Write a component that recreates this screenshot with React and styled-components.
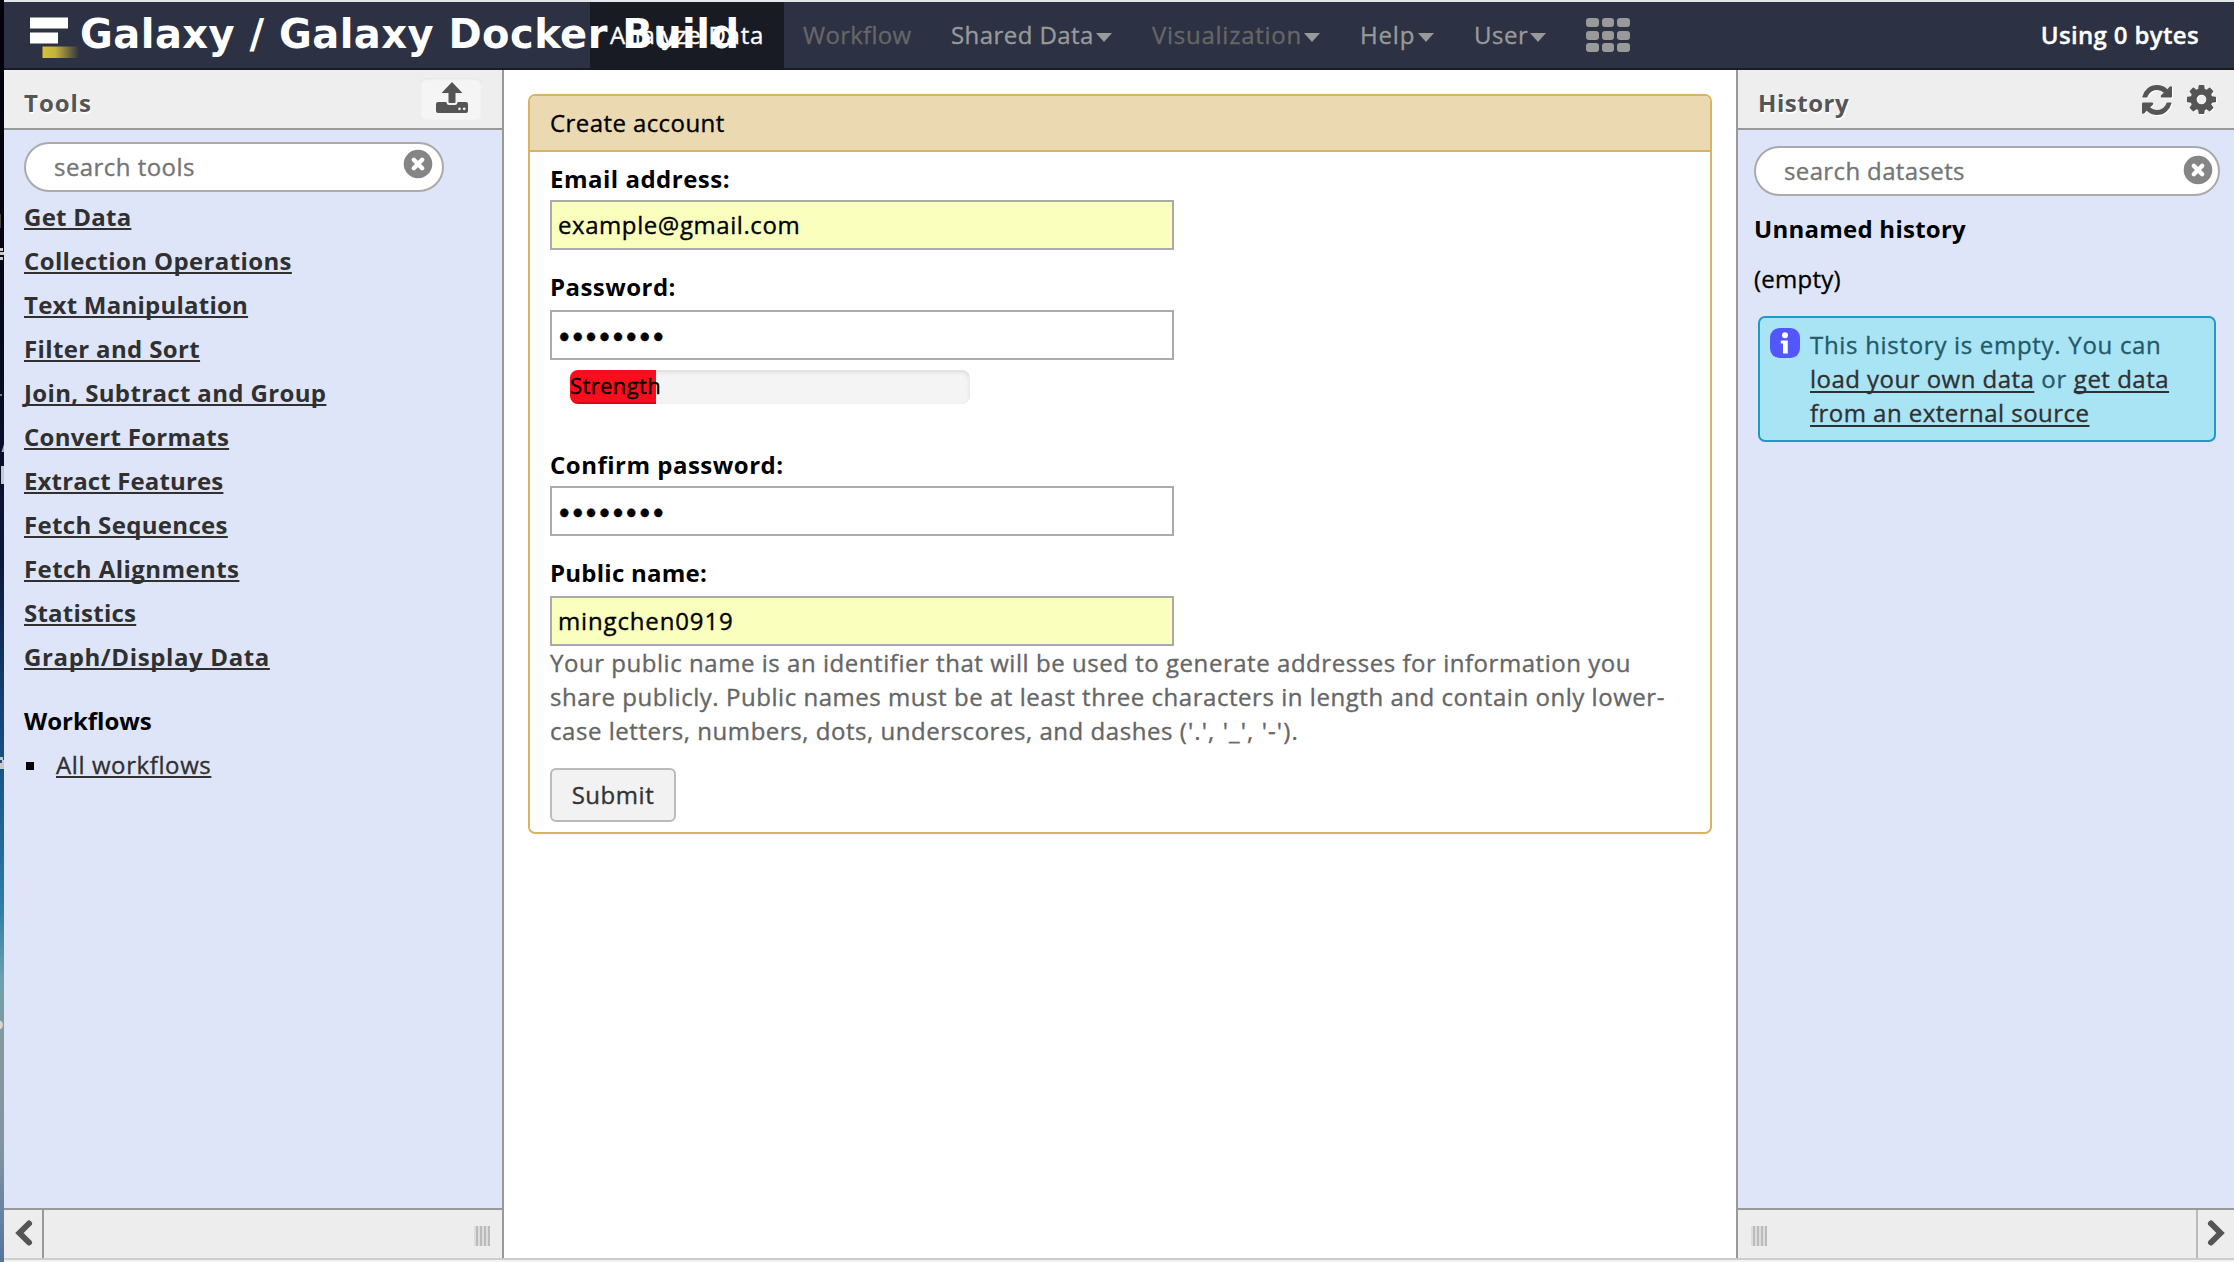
import React from "react";
import styled, { createGlobalStyle, css } from "styled-components";

const Global = createGlobalStyle`
  * { box-sizing: border-box; }
  html, body { margin: 0; padding: 0; }
  body {
    font-family: "Open Sans", "Noto Sans", sans-serif;
    font-size: 24px;
    line-height: 34px;
    color: #000;
    overflow: hidden;
    -webkit-text-stroke-width: 0.35px;
  }
  input, button { font: inherit; }
`;

const heavy = css`
  font-weight: 700;
  -webkit-text-stroke-width: 0;
`;

const Screen = styled.div`
  display: flex;
  width: 2234px;
  height: 1262px;
`;

const Desktop = styled.div`
  width: 4px;
  flex: none;
  background: linear-gradient(
    180deg,
    #02020a 0, #03040f 200px, #070b24 400px, #0d1839 560px, #14396b 680px,
    #1c5c90 800px, #2f7fa6 910px, #6fa0ae 980px, #86979c 1050px,
    #8194a4 1150px, #56749a 1262px
  );
  svg { display: block; }
`;

const Window = styled.div`
  flex: 1;
  display: flex;
  flex-direction: column;
  border-top: 2px solid #e3e7e8;
`;

const Masthead = styled.header`
  display: flex;
  height: 68px;
  flex: none;
  background: #2c3143;
  border-bottom: 2px solid #181b24;
`;

const Brand = styled.div`
  position: relative;
  z-index: 1;
  display: flex;
  align-items: flex-start;
  width: 586px;
  padding: 12px 0 0 23px;
  white-space: nowrap;
  svg { flex: none; }
`;

const BrandName = styled.span`
  ${heavy}
  margin-left: -3px;
  font: bold 40px/40px "DejaVu Sans", Verdana, sans-serif;
  letter-spacing: 0.45px;
  color: #fff;
`;

const Nav = styled.nav`
  display: flex;
  flex: 1;
`;

const navColors = { active: "#fff", normal: "#999", disabled: "#666" };

const NavItem = styled.a`
  display: flex;
  align-items: center;
  justify-content: space-between;
  width: ${(p) => p.$width}px;
  padding: 0 20px 0 ${(p) => p.$start || 20}px;
  white-space: nowrap;
  letter-spacing: ${(p) => p.$spacing}px;
  color: ${(p) => navColors[p.$state]};
  ${(p) => p.$state === "active" && css`background: #191b24;`}
`;

const Caret = styled.i`
  margin-top: 5px;
  border: 8px solid transparent;
  border-top: 9px solid #999;
  border-bottom: 0;
`;

const AppsGrid = styled.div`
  display: grid;
  grid-template-columns: repeat(3, 12.5px);
  grid-auto-rows: 9px;
  gap: 3.5px 3px;
  align-self: center;
  margin-left: 20px;
`;

const GridCell = styled.i`
  border-radius: 3px;
  background: #999;
`;

const Quota = styled.div`
  align-self: center;
  padding-right: 35px;
  font-weight: 600;
  letter-spacing: 0.35px;
  color: #fff;
`;

const Main = styled.div`
  display: flex;
  flex: 1;
  min-height: 0;
`;

const Panel = styled.aside`
  display: flex;
  flex-direction: column;
  flex: none;
  width: ${(p) => p.$width}px;
  background: #dfe5f9;
  border: 0 solid #999;
  border-${(p) => p.$edge}-width: 2px;
`;

const PanelHeader = styled.div`
  display: flex;
  align-items: center;
  height: 60px;
  padding: 0 18px 0 20px;
  background: #eee;
  border-bottom: 2px solid #999;
`;

const PanelTitle = styled.h2`
  ${heavy}
  flex: 1;
  margin: 0;
  padding-top: 8px;
  font-size: 24px;
  letter-spacing: ${(p) => p.$spacing}px;
  color: #555;
  text-shadow: 1px 2px 0 #fff;
`;

const UploadButton = styled.button`
  display: flex;
  align-items: center;
  justify-content: center;
  width: 62px;
  height: 42px;
  margin-right: 2px;
  padding: 0 0 2px 2px;
  border: 0;
  border-radius: 6px;
  background: #f5f5f5;
  box-shadow: inset 0 1px 3px rgba(0, 0, 0, 0.08);
`;

const HeaderIcons = styled.div`
  display: flex;
  gap: 15px;
  padding-top: 2px;
  svg { display: block; filter: drop-shadow(1px 1px 0 #fff); }
`;

const PanelBody = styled.div`
  flex: 1;
  padding: ${(p) => p.$padding};
`;

const PanelFooter = styled.div`
  display: flex;
  align-items: center;
  justify-content: space-between;
  height: 50px;
  background: #ededed;
  border-top: 2px solid #999;
`;

const Toggle = styled.div`
  display: flex;
  align-items: center;
  justify-content: center;
  height: 48px;
  width: ${(p) => (p.$side === "left" ? 40 : 38)}px;
  padding: 0 0 2px ${(p) => (p.$side === "left" ? 2 : 0)}px;
  border: 0 solid ${(p) => (p.$side === "left" ? "#999" : "#bbb")};
  border-${(p) => (p.$side === "left" ? "right" : "left")}-width: 2px;
`;

const Grip = styled.div`
  width: 16px;
  height: 20px;
  margin: 4px 12px 0 13px;
  background: repeating-linear-gradient(90deg, #ddd 0 2px, #bbb 2px 4px);
`;

const SearchBox = styled.div`
  display: flex;
  align-items: center;
  width: ${(p) => p.$width}px;
  height: 50px;
  padding: 0 ${(p) => p.$end}px 0 28px;
  border: 2px solid #aaa;
  border-radius: 25px;
  background: #fff;
  svg { flex: none; margin-bottom: ${(p) => p.$lift}px; }
`;

const SearchInput = styled.input`
  flex: 1;
  min-width: 0;
  padding: 0;
  border: 0;
  outline: 0;
  background: none;
  letter-spacing: ${(p) => p.$spacing}px;
  &::placeholder { color: #757575; opacity: 1; }
`;

const Link = styled.a`
  color: #303030;
  letter-spacing: ${(p) => p.$spacing}px;
  text-decoration: underline;
  text-decoration-thickness: 2px;
  text-underline-offset: 2px;
  text-decoration-skip-ink: none;
`;

const ToolList = styled.ul`
  ${heavy}
  margin: 3px 0 20px;
  padding: 0;
  list-style: none;
  line-height: 44px;
`;

const SectionTitle = styled.div`
  ${heavy}
  line-height: 44px;
`;

const WorkflowRow = styled.div`
  display: flex;
  align-items: center;
  gap: 22px;
  padding-left: 2px;
  line-height: 44px;
  &::before { content: ""; width: 8px; height: 8px; margin-top: 2px; background: #000; }
`;

const Center = styled.main`
  flex: 1;
  padding: 24px;
  background: #fff;
`;

const Card = styled.section`
  height: 740px;
  border: 2px solid #d8b365;
  border-radius: 7px;
  overflow: hidden;
`;

const CardHeader = styled.div`
  height: 56px;
  padding: 10px 20px 0;
  letter-spacing: 0.42px;
  background: #ebd9b2;
  border-bottom: 2px solid #d8b365;
`;

const Form = styled.form`
  padding: 10px 20px 0;
`;

const Label = styled.label`
  ${heavy}
  display: block;
  margin-top: ${(p) => p.$top || 0}px;
  margin-bottom: ${(p) => p.$gap}px;
  letter-spacing: ${(p) => p.$spacing}px;
`;

const Field = styled.input`
  display: block;
  width: 624px;
  height: 50px;
  padding: 0 6px 2px;
  border: 2px solid #aaa;
  border-radius: 0;
  outline: 0;
  color: #000;
  letter-spacing: ${(p) => p.$spacing}px;
  background: ${(p) => (p.$filled ? "#faffbd" : "#fff")};
  ${(p) => p.type === "password" && css`
    padding: 4px 4px 0;
    font-family: "DejaVu Sans", sans-serif;
    font-size: 28px;
    letter-spacing: -3.1px;
  `}
`;

const Meter = styled.div`
  width: 400px;
  height: 34px;
  margin: 10px 0 0 20px;
  border-radius: 8px;
  background: #f4f4f4;
  box-shadow: inset 0 2px 4px rgba(0, 0, 0, 0.1);
  overflow: hidden;
`;

const MeterBar = styled.div`
  width: 86px;
  height: 34px;
  font-size: 22px;
  line-height: 30px;
  letter-spacing: 0.4px;
  white-space: nowrap;
  background: #fc0d1b;
  box-shadow: inset 0 -2px 0 rgba(0, 0, 0, 0.15);
`;

const Help = styled.p`
  margin: 0;
  color: #666;
  letter-spacing: 0.54px;
  white-space: nowrap;
`;

const Symbols = styled.span`
  letter-spacing: 1.1px;
`;

const Submit = styled.button`
  display: block;
  width: 126px;
  height: 54px;
  margin-top: 20px;
  padding: 0;
  border: 2px solid #bbb;
  border-radius: 6px;
  background: #f2f2f2;
  letter-spacing: 0.55px;
  color: #333;
`;

const HistoryName = styled.div`
  ${heavy}
  margin-top: 16px;
  letter-spacing: 0.25px;
`;

const HistorySize = styled.div`
  margin: 16px 0 20px;
  letter-spacing: 0.24px;
`;

const Notice = styled.div`
  display: flex;
  gap: 10px;
  width: 458px;
  height: 126px;
  margin-left: 4px;
  padding: 10px 0 0 10px;
  border: 2px solid #1f9ac4;
  border-radius: 7px;
  background: #a9e4f5;
  color: #245a69;
  white-space: nowrap;
  letter-spacing: 0.7px;
  svg { flex: none; }
  a { text-underline-offset: 3px; }
`;

const StatusEdge = styled.div`
  height: 4px;
  flex: none;
  background: #f2f2f2;
  border-top: 2px solid #ccc;
`;

const ClearIcon = () => (
  <svg width="30" height="30" viewBox="0 0 30 30">
    <circle cx="15" cy="15" r="14.3" fill="#858585" />
    <path d="M10.8 10.8 L19.2 19.2 M19.2 10.8 L10.8 19.2" stroke="#fff" strokeWidth="4.4" strokeLinecap="round" />
  </svg>
);

const UploadIcon = () => (
  <svg width="34" height="34" viewBox="0 0 34 34" fill="#555">
    <path d="M17 1 L27.5 12 H20.5 V21 Q20.5 22 19.5 22 H14.5 Q13.5 22 13.5 21 V12 H6.5 Z" />
    <path d="M3 21 H11.5 V22 Q12 24 14 24 H20 Q22 24 22.5 22 V21 H31 Q33 21 33 23 V30 Q33 32 31 32 H3 Q1 32 1 30 V23 Q1 21 3 21 Z" />
    <circle cx="24.5" cy="27.8" r="1.4" fill="#f5f5f5" />
    <circle cx="29.2" cy="27.8" r="1.4" fill="#f5f5f5" />
  </svg>
);

const RefreshIcon = () => (
  <svg width="30" height="30" viewBox="0 0 1536 1536" fill="#555">
    <path d="M1511 928q0 5-1 7-64 268-268 434.5t-478 166.5q-146 0-282.5-55t-243.5-157l-129 129q-19 19-45 19t-45-19-19-45v-448q0-26 19-45t45-19h448q26 0 45 19t19 45-19 45l-137 137q71 66 161 102t187 36q134 0 250-65t186-179q11-17 53-117 8-23 30-23h192q13 0 22.5 9.5t9.5 22.5zm25-800v448q0 26-19 45t-45 19h-448q-26 0-45-19t-19-45 19-45l138-138q-148-137-349-137-134 0-250 65t-186 179q-11 17-53 117-8 23-30 23h-199q-13 0-22.5-9.5t-9.5-22.5v-7q65-268 270-434.5t480-166.5q146 0 284 55.5t245 156.5l130-129q19-19 45-19t45 19 19 45z" />
  </svg>
);

const GearIcon = () => (
  <svg width="29" height="29" viewBox="0 0 1536 1536" fill="#555">
    <path d="M1024 768q0-106-75-181t-181-75-181 75-75 181 75 181 181 75 181-75 75-181zm512-109v222q0 12-8 23t-20 13l-185 28q-19 54-39 91 35 50 107 138 10 12 10 25t-9 23q-27 37-99 108t-94 71q-12 0-26-9l-138-108q-44 23-91 38-16 136-29 186-7 28-36 28h-222q-14 0-24.5-8.5t-11.5-21.5l-28-184q-49-16-90-37l-141 107q-10 9-25 9-14 0-25-11-126-114-165-168-7-10-7-23 0-12 8-23 15-21 51-66.5t54-70.5q-27-50-41-99l-183-27q-13-2-21-12.5t-8-23.5v-222q0-12 8-23t19-13l186-28q14-46 39-92-40-57-107-138-10-12-10-24 0-10 9-23 26-36 98.5-107.5t94.5-71.5q13 0 26 10l138 107q44-23 91-38 16-136 29-186 7-28 36-28h222q14 0 24.5 8.5t11.5 21.5l28 184q49 16 90 37l142-107q9-9 24-9 13 0 25 10 129 119 165 170 7 8 7 22 0 12-8 23-15 21-51 66.5t-54 70.5q26 50 41 98l183 28q13 2 21 12.5t8 23.5z" />
  </svg>
);

const Chevron = ({ d }) => (
  <svg width="20" height="28" viewBox="0 0 20 28">
    <path d={d} fill="none" stroke="#555" strokeWidth="6" strokeLinecap="round" />
  </svg>
);

const InfoIcon = () => (
  <svg width="30" height="30" viewBox="0 0 30 30">
    <rect width="30" height="30" rx="9.5" fill="#5257fb" />
    <g fill="#fff">
      <circle cx="15" cy="7.2" r="3" />
      <path d="M10.8 12.4 H17.8 V25.4 H13 V15.6 H10.8 Z" />
    </g>
  </svg>
);

const Logo = () => (
  <svg width="56" height="50" viewBox="0 0 56 50">
    <defs>
      <linearGradient id="tail" x1="0" x2="1">
        <stop offset="0" stopColor="#d5c23a" />
        <stop offset="0.35" stopColor="#c4b23c" />
        <stop offset="1" stopColor="#2c3143" />
      </linearGradient>
      <filter id="soft"><feGaussianBlur stdDeviation="0.7" /></filter>
    </defs>
    <g filter="url(#soft)">
      <rect x="3" y="3.5" width="38" height="11" fill="#fff" />
      <rect x="3" y="18.5" width="28" height="11" fill="#fff" />
      <rect x="15.5" y="32.5" width="37" height="11.5" fill="url(#tail)" />
    </g>
  </svg>
);

const tools = [
  ["Get Data", 0.25],
  ["Collection Operations", 0.37],
  ["Text Manipulation", 0.24],
  ["Filter and Sort", 0.36],
  ["Join, Subtract and Group", 0.36],
  ["Convert Formats", 0.3],
  ["Extract Features", 0.14],
  ["Fetch Sequences", 0.33],
  ["Fetch Alignments", 0.43],
  ["Statistics", 0.24],
  ["Graph/Display Data", 0.62],
];

const menus = [
  { label: "Analyze Data", width: 194, state: "active", spacing: 0.77 },
  { label: "Workflow", width: 148, state: "disabled", spacing: 0.27, start: 19 },
  { label: "Shared Data", width: 200, state: "normal", spacing: 0.43, caret: true, start: 19 },
  { label: "Visualization", width: 208, state: "disabled", spacing: 0.74, caret: true },
  { label: "Help", width: 114, state: "normal", spacing: 0.8, caret: true },
  { label: "User", width: 112, state: "normal", spacing: 0.53, caret: true },
];

export default function App() {
  return (
    <Screen>
      <Global />
      <Desktop>
        <svg width="4" height="1262" viewBox="0 0 4 1262" fill="#c9c9c9">
          <rect x="0" y="214" width="1" height="14" fill="#444" />
          <rect x="0" y="248" width="3" height="3" />
          <rect x="0" y="252" width="4" height="3" />
          <rect x="0" y="257" width="3" height="3" />
          <rect x="0" y="394" width="2" height="2" fill="#778" />
          <path d="M4 444 V452 H1.5 Z" fill="#aab" />
          <rect x="1" y="466" width="3" height="18" />
          <rect x="0" y="757" width="3" height="3" />
          <rect x="2" y="760" width="2" height="9" />
          <rect x="0" y="763" width="2" height="6" />
          <circle cx="-2" cy="1025" r="5" fill="#d6d6cf" />
        </svg>
      </Desktop>
      <Window>
        <Masthead>
          <Brand>
            <Logo />
            <BrandName>Galaxy / Galaxy Docker Build</BrandName>
          </Brand>
          <Nav>
            {menus.map((m) => (
              <NavItem key={m.label} $width={m.width} $start={m.start} $state={m.state} $spacing={m.spacing}>
                {m.label}
                {m.caret && <Caret />}
              </NavItem>
            ))}
            <AppsGrid>
              {Array.from({ length: 9 }, (_, i) => <GridCell key={i} />)}
            </AppsGrid>
          </Nav>
          <Quota>Using 0 bytes</Quota>
        </Masthead>
        <Main>
          <Panel $width={500} $edge="right">
            <PanelHeader>
              <PanelTitle $spacing={1}>Tools</PanelTitle>
              <UploadButton><UploadIcon /></UploadButton>
            </PanelHeader>
            <PanelBody $padding="12px 20px 0">
              <SearchBox $width={420} $end={9} $lift={7}>
                <SearchInput placeholder="search tools" $spacing={0.45} />
                <ClearIcon />
              </SearchBox>
              <ToolList>
                {tools.map(([name, spacing]) => (
                  <li key={name}><Link $spacing={spacing}>{name}</Link></li>
                ))}
              </ToolList>
              <SectionTitle>Workflows</SectionTitle>
              <WorkflowRow><Link $spacing={0.6}>All workflows</Link></WorkflowRow>
            </PanelBody>
            <PanelFooter>
              <Toggle $side="left"><Chevron d="M15 4.5 L5.5 14 L15 23.5" /></Toggle>
              <Grip />
            </PanelFooter>
          </Panel>
          <Center>
            <Card>
              <CardHeader>Create account</CardHeader>
              <Form>
                <Label $gap={4} $spacing={0.5}>Email address:</Label>
                <Field $filled $spacing={0.57} defaultValue="example@gmail.com" />
                <Label $top={20} $gap={6} $spacing={0.45}>Password:</Label>
                <Field type="password" defaultValue="password" />
                <Meter><MeterBar>Strength</MeterBar></Meter>
                <Label $top={44} $gap={4} $spacing={0.5}>Confirm password:</Label>
                <Field type="password" defaultValue="password" />
                <Label $top={20} $gap={6} $spacing={0.25}>Public name:</Label>
                <Field $filled $spacing={0.85} defaultValue="mingchen0919" />
                <Help>
                  Your public name is an identifier that will be used to generate addresses for information you<br />
                  share publicly. Public names must be at least three characters in length and contain only lower-<br />
                  case letters, numbers, dots, underscores, and dashes <Symbols>('.', '_', '-').</Symbols>
                </Help>
                <Submit type="button">Submit</Submit>
              </Form>
            </Card>
          </Center>
          <Panel $width={498} $edge="left">
            <PanelHeader>
              <PanelTitle $spacing={0.53}>History</PanelTitle>
              <HeaderIcons><RefreshIcon /><GearIcon /></HeaderIcons>
            </PanelHeader>
            <PanelBody $padding="16px 14px 0 16px">
              <SearchBox $width={466} $end={5} $lift={2}>
                <SearchInput placeholder="search datasets" $spacing={0.37} />
                <ClearIcon />
              </SearchBox>
              <HistoryName>Unnamed history</HistoryName>
              <HistorySize>(empty)</HistorySize>
              <Notice>
                <InfoIcon />
                <div>
                  This history is empty. You can<br />
                  <Link $spacing={0.47}>load your own data</Link> or <Link $spacing={0.5}>get data</Link><br />
                  <Link $spacing={0.47}>from an external source</Link>
                </div>
              </Notice>
            </PanelBody>
            <PanelFooter>
              <Grip />
              <Toggle $side="right"><Chevron d="M5 4.5 L14.5 14 L5 23.5" /></Toggle>
            </PanelFooter>
          </Panel>
        </Main>
        <StatusEdge />
      </Window>
    </Screen>
  );
}
